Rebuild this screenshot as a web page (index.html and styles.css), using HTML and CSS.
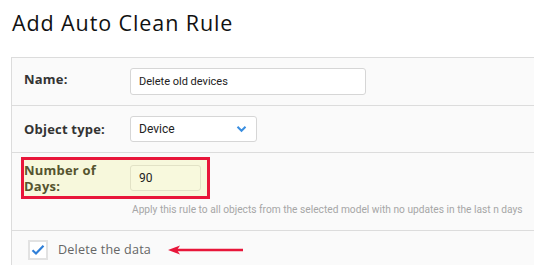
FILE: index.html
```html
<!DOCTYPE html>
<html>
<head>
<meta charset="utf-8">
<link rel="stylesheet" href="styles.css">
</head>
<body>
<h1 class="title">Add Auto Clean Rule</h1>
<div class="panel">
  <div class="row row-name">
    <label class="lbl">Name:</label>
    <div class="input input-name">Delete old devices</div>
  </div>
  <div class="row row-type">
    <label class="lbl">Object type:</label>
    <div class="input select">
      <span>Device</span>
      <svg class="chev" width="11" height="8" viewBox="0 0 11 8"><path d="M1.5 1.8 L5.5 5.8 L9.5 1.8" fill="none" stroke="#3a8ee0" stroke-width="2"/></svg>
    </div>
  </div>
  <div class="row row-days">
    <div class="hl">
      <label class="lbl lbl-days">Number of Days:</label>
      <div class="input input-days">90</div>
    </div>
    <div class="help">Apply this rule to all objects from the selected model with no updates in the last n days</div>
  </div>
  <div class="row row-check">
    <span class="box"><svg width="14" height="12" viewBox="0 0 14 12"><path d="M1.5 6.2 L5 9.5 L12.5 1.8" fill="none" stroke="#2f7fd8" stroke-width="2.2"/></svg></span>
    <span class="check-text">Delete the data</span>
    <svg class="arrow" width="78" height="12" viewBox="0 0 78 12"><path d="M76 6 L10 6" stroke="#e8163a" stroke-width="2.4"/><path d="M1 6 L13 1.5 L10 6 L13 10.5 Z" fill="#e8163a"/></svg>
  </div>
</div>
</body>
</html>
```
FILE: styles.css
```css
html, body { margin: 0; padding: 0; background: #fff; overflow: hidden; }
body { width: 534px; height: 265px; }
.title {
  margin: 0;
  padding: 8px 0 0 12px;
  height: 50px;
  box-sizing: border-box;
  font-family: "Open Sans", sans-serif;
  font-weight: 400;
  font-size: 21.5px;
  line-height: 30px;
  color: #111;
  letter-spacing: 0.9px;
}
.panel {
  margin: 7px 0 0 11px;
  width: 600px;
  background: #fafafa;
  border: 1px solid #dcdcdc;
  border-right: none;
}
.row {
  border-bottom: 1px solid #dcdcdc;
  display: flex;
  align-items: center;
  padding-left: 12px;
  box-sizing: border-box;
}
.lbl {
  width: 106px;
  flex: none;
  font-family: "Open Sans", sans-serif;
  font-weight: 700;
  font-size: 13px;
  color: #333;
  letter-spacing: 0.2px;
}
.input {
  box-sizing: border-box;
  background: #fff;
  border: 1px solid #d6d6d6;
  border-radius: 3px;
  font-family: Roboto, sans-serif;
  font-size: 12px;
  color: #222;
  display: flex;
  align-items: center;
  padding-left: 8px;
}
.row-name { height: 48px; }
.row-name .lbl { margin-top: -5px; }
.input-name { width: 236px; height: 27px; margin-top: -1px; font-size: 11px; }
.row-type { height: 47px; }
.select { width: 127px; height: 26px; justify-content: space-between; padding-right: 9px; }
.chev { display: block; }
.row-days {
  height: 78px;
  flex-direction: column;
  align-items: flex-start;
  padding-left: 9px;
}
.hl {
  margin-top: 4px;
  width: 189px;
  height: 42px;
  box-sizing: border-box;
  border: 3px solid #e8163a;
  background: #f7f8dc;
  display: flex;
  align-items: center;
  padding-left: 0;
}
.lbl-days {
  width: 106px;
  color: #55542f;
  line-height: 16px;
  font-size: 13px;
  padding-left: 0;
}
.input-days {
  width: 71px;
  height: 26px;
  background: #f8f9dd;
  border-color: #e2e2c6;
}
.help {
  margin: 5px 0 0 111px;
  font-family: Roboto, sans-serif;
  font-size: 10.2px;
  color: #a6a6a6;
  white-space: nowrap;
}
.row-check {
  height: 40px;
  border-bottom: none;
  padding-left: 16px;
  padding-top: 9px;
  align-items: flex-start;
}
.box {
  width: 20px;
  height: 20px;
  box-sizing: border-box;
  border: 2px solid #e2e2e2;
  background: #fff;
  display: flex;
  align-items: center;
  justify-content: center;
}
.box svg { display: block; }
.check-text {
  margin-left: 10px;
  font-family: "Open Sans", sans-serif;
  font-size: 12.6px;
  line-height: 20px;
  color: #666;
  letter-spacing: 0.2px;
}
.arrow { margin-left: 16px; margin-top: 4px; display: block; }
```
